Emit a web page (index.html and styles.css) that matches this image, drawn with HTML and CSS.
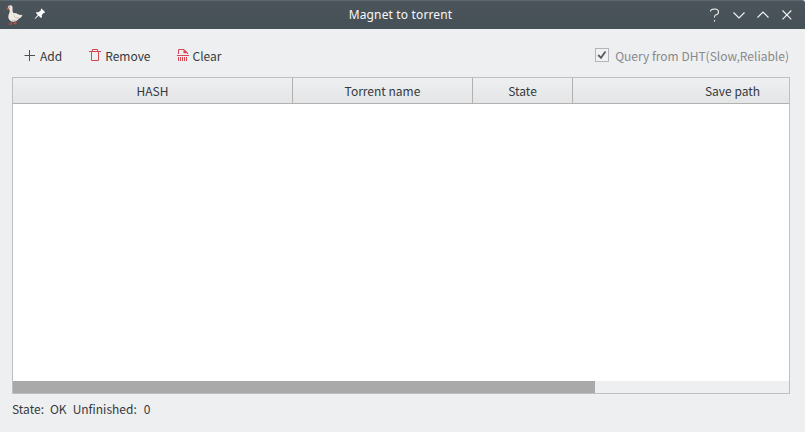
FILE: index.html
```html
<!DOCTYPE html>
<html lang="en">
<head>
<meta charset="utf-8">
<title>Magnet to torrent</title>
<link rel="stylesheet" href="styles.css">
</head>
<body>
<div class="window">
  <header class="titlebar">
    <div class="title-left">
      <svg class="duck" width="18" height="20" viewBox="0 0 18 20">
        <path d="M6.500 16l-.3 3.200H3.500M10 16l1 2.700H8.500" fill="none" stroke="#c94a36" stroke-width="1.300"/>
        <path d="M2.800 2Q3.500 .2 5.500 .3Q7.800.6 7.500 3.500Q7 6.500 8.500 8.200Q11 7.800 13 9.200Q15 10.300 17.500 9.800Q16.800 12.700 14 13.800Q11.500 17 8 16.800Q4 16 3.300 12.500Q3.200 10 4.300 8Q5.200 6 4.500 4.500Q2.800 4 2.800 2z" fill="#efe9e3"/>
        <path d="M3.300 2.200L1.300 4.300Q2.800 5 4.500 4z" fill="#d8664a"/>
        <path d="M9 10.500Q10 13.800 14 12.800M7 15Q9 16 11.500 15.200" fill="none" stroke="#c3b5ac" stroke-width=".8"/>
        <circle cx="4.700" cy="2" r=".5" fill="#46413f"/>
      </svg>
      <svg class="pin" width="12" height="12" viewBox="0 0 12 12">
        <path d="M7.500 .5L11 4L10.500 5L9.500 5L7.700 7.200L8 9L7 10L4.600 7.800L1 11L.6 10.600L3.800 7L2 5L2.700 4L4.500 4.200L7 2.200L6.800 1.200z" fill="#fcfcfc"/>
      </svg>
    </div>
    <h1 class="title">Magnet to torrent</h1>
    <svg class="controls" width="84" height="14" viewBox="0 0 84 14">
      <g fill="none" stroke="#f4f5f5" stroke-width="1.100">
        <path d="M2.500 3.500Q2.500 1 6.500 1Q10.500 1 10.500 4Q10.500 6.500 7.500 7Q6.500 7.300 6.500 9.500M6.500 12v1.500"/>
        <path d="M25.500 4.500L31 10L36.500 4.500"/>
        <path d="M49.500 9.500L55 4L60.500 9.500"/>
        <path d="M74.500 2.500L83.300 11.300M83.300 2.500L74.500 11.300"/>
      </g>
    </svg>
  </header>
  <main class="content">
    <div class="toolbar">
      <button class="tool add">
        <svg width="12" height="13" viewBox="0 0 12 13"><path d="M.5 6.500H11M5.500 1V12" fill="none" stroke="#4d5052"/></svg>
        <span>Add</span>
      </button>
      <button class="tool remove">
        <svg width="12" height="13" viewBox="0 0 12 13"><path d="M0 2.500H12M3.500 2V.5H8.500V2M2.500 3V11.500H9.500V3" fill="none" stroke="#da4453"/></svg>
        <span>Remove</span>
      </button>
      <button class="tool clear">
        <svg width="12" height="13" viewBox="0 0 12 13"><path d="M1.500 5V.5H7L10.500 4V5M0 6.500H12M1.500 8V12M3.500 8V12M5.500 8V12M7.500 8V12M9.500 8V12" fill="none" stroke="#da4453"/><path d="M6.500 0L11 4.200H6.500z" fill="#da4453"/></svg>
        <span>Clear</span>
      </button>
      <label class="query">
        <svg width="14" height="14" viewBox="0 0 14 14"><rect x=".5" y=".5" width="13" height="13" fill="#f1f2f3" stroke="#b3b5b7"/><path d="M3.200 7L6 9.800L10.500 3.500" fill="none" stroke="#5b5e60" stroke-width="1.900"/></svg>
        <span>Query from DHT(Slow,Reliable)</span>
      </label>
    </div>
    <div class="table">
      <div class="thead">
        <div class="th">HASH</div>
        <div class="th">Torrent name</div>
        <div class="th">State</div>
        <div class="th">Save path</div>
      </div>
      <div class="tbody"></div>
      <div class="scrollbar"><div class="thumb"></div></div>
    </div>
    <footer class="status"><span>State:</span><span class="ok">OK</span><span class="unfinished">Unfinished:</span><span class="count">0</span></footer>
  </main>
</div>
</body>
</html>
```
FILE: styles.css
```css
* { box-sizing: border-box; }
body {
  margin: 0;
  background: #eeeff1;
  color: #35393c;
  font: 12px/20px "Noto Sans CJK SC", "Noto Sans", sans-serif;
}
.window {
  width: 805px;
  height: 432px;
  overflow: hidden;
  display: flex;
  flex-direction: column;
}
.titlebar {
  height: 29px;
  flex: none;
  display: grid;
  grid-template-columns: 1fr auto 1fr;
  align-items: center;
  padding: 0 13px 0 5px;
  background: linear-gradient(#4b545b, #465057);
  border-top: 1px solid #5a6871;
  border-radius: 0 3px 0 0;
}
.title-left { display: flex; align-items: center; }
.duck { margin-top: -1px; }
.pin { margin: -2px 0 0 11px; }
.title {
  margin: 0 0 0 4px;
  color: #f6f7f7;
  font: 400 12px/20px "Noto Sans", sans-serif;
  letter-spacing: 0.15px;
}
.controls { justify-self: end; margin-top: -1px; }
.content {
  flex: 1;
  display: flex;
  flex-direction: column;
  padding: 17px 15px 0 12px;
}
.toolbar {
  height: 31px;
  flex: none;
  display: flex;
  align-items: flex-start;
}
.tool {
  display: flex;
  align-items: center;
  gap: 4px;
  padding: 0;
  border: 0;
  background: none;
  color: inherit;
  font: inherit;
}
.add { margin-left: 12px; }
.remove { margin-left: 27px; }
.clear { margin-left: 26px; }
.tool svg { margin-top: -1px; }
.query svg { margin-top: -2px; }
.query {
  margin-left: auto;
  display: flex;
  align-items: center;
  gap: 6px;
  color: #88898b;
  margin-right: 1px;
}
.table {
  height: 317px;
  flex: none;
  display: flex;
  flex-direction: column;
  border: 1px solid #bdbfc1;
  background: #fff;
}
.thead {
  height: 26px;
  flex: none;
  display: grid;
  grid-template-columns: 280px 180px 100px 320px;
  overflow: hidden;
  border-bottom: 1px solid #b3b0ad;
  background: linear-gradient(#eeeff0, #e4e5e7);
}
.th {
  line-height: 26px;
  text-align: center;
  border-right: 1px solid #b3b0ad;
}
.tbody { flex: 1; }
.scrollbar { height: 12px; background: #eeeff1; }
.thumb { width: 582px; height: 12px; background: #a9a9a9; }
.status { display: flex; margin-top: 5px; }
.ok { margin-left: 6px; }
.unfinished { margin-left: 6px; }
.count { margin-left: 7px; }
```
